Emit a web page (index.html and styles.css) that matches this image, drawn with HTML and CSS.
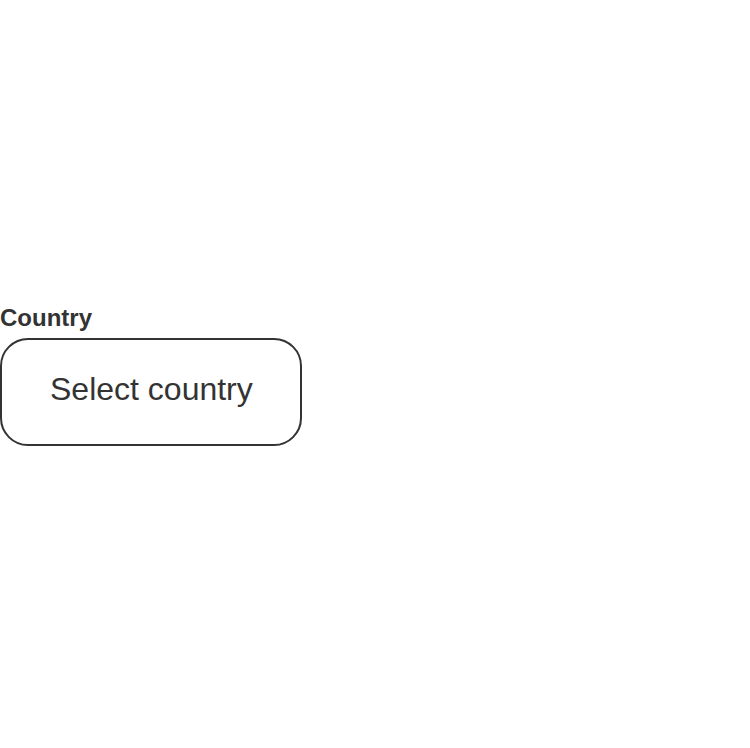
FILE: index.html
```html
<!DOCTYPE html>
<html>
<head>
<meta charset="utf-8">
<link rel="stylesheet" href="styles.css">
</head>
<body>
<div class="field">
  <label class="label" for="country">Country</label>
  <button class="select" id="country">Select country</button>
</div>
</body>
</html>
```
FILE: styles.css
```css
html, body {
  margin: 0;
  height: 100%;
  background: #fff;
}
body {
  display: flex;
  flex-direction: column;
  justify-content: center;
  align-items: flex-start;
  font-family: "Liberation Sans", Arial, sans-serif;
  color: #333;
}
.field {
  display: flex;
  flex-direction: column;
  align-items: flex-start;
  gap: 6px;
  padding-top: 2px;
}
.label {
  font-size: 24px;
  font-weight: bold;
  color: #333;
  line-height: 28px;
}
.select {
  font-family: "Liberation Sans", Arial, sans-serif;
  font-size: 32px;
  color: #333;
  background: #fff;
  border: 2px solid #333;
  border-radius: 28px;
  padding: 31px 47px 36px 48px;
  line-height: 37px;
  margin: 0;
}
```
